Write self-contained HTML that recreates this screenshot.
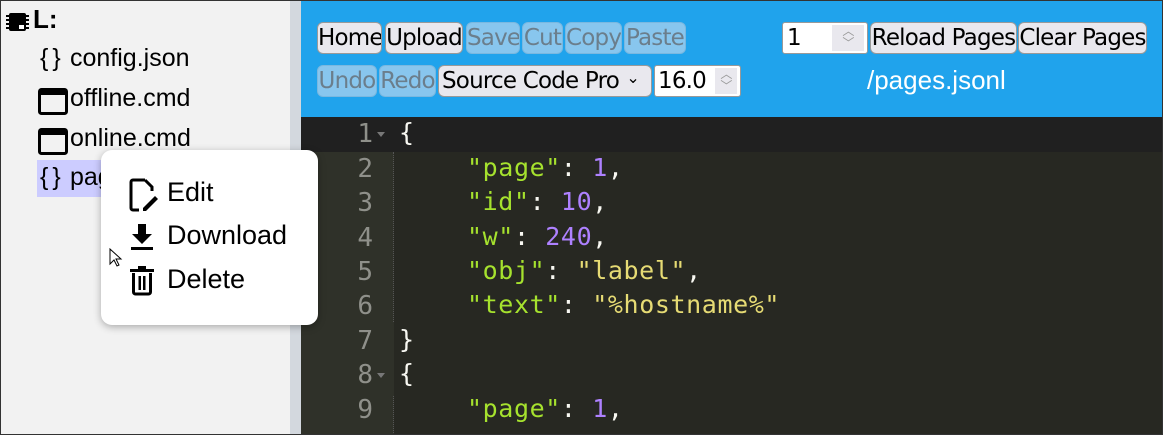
<!DOCTYPE html><html><head><style>
*{box-sizing:border-box;margin:0;padding:0}
body{width:1163px;height:435px;overflow:hidden;position:relative;background:#2f3129;font-family:"Liberation Sans",sans-serif}
.frame{position:absolute;inset:0;border:1px solid #333;z-index:50;pointer-events:none}
.side{position:absolute;left:0;top:0;width:290px;height:435px;background:#f2f2f2}
.sb{position:absolute;left:290px;top:0;width:11px;height:435px;background:#d3d8de}
.it{position:absolute;font-size:25px;color:#000;white-space:nowrap}
.hdr{position:absolute;left:301px;top:0;width:862px;height:117px;background:#20a3ec}
.b{position:absolute;height:32px;border:1px solid #999;border-radius:6px;background:#e9e8ee;font-size:23px;line-height:30px;text-align:center;color:#000;font-family:"DejaVu Sans","Liberation Sans",sans-serif;letter-spacing:-0.8px;white-space:nowrap;overflow:hidden}
.d{background:#88c6ee;border-color:#7ab8e0;color:#6b7e8c}
.ed{position:absolute;left:394px;top:117px;width:769px;height:318px;background:#272822}
.act{position:absolute;left:301px;top:117px;width:862px;height:35px;background:#202020}
.ln{position:absolute;left:301px;width:72px;text-align:right;font-family:"DejaVu Sans Mono",monospace;font-size:26px;color:#8f908a}
.code{position:absolute;font-family:"DejaVu Sans Mono",monospace;font-size:25px;color:#f8f8f2;white-space:pre;letter-spacing:0.6px}
.s{color:#a6e22e}.n{color:#ae81ff}.v{color:#e6db74}
.menu{position:absolute;left:101px;top:150px;width:217px;height:175px;background:#fff;border-radius:11px;box-shadow:0 2px 8px rgba(0,0,0,.3);z-index:10}
.mi{position:absolute;left:66px;font-size:27px;color:#000}
</style></head><body>
<div class="side">
<svg style="position:absolute;left:5px;top:12px" width="25" height="20" viewBox="0 0 25 20"><rect x="4" y="1" width="17" height="18" rx="2" fill="#000"/><g stroke="#000" stroke-width="2"><line x1="1" y1="4" x2="24" y2="4"/><line x1="1" y1="8" x2="24" y2="8"/><line x1="1" y1="12" x2="24" y2="12"/><line x1="1" y1="16" x2="24" y2="16"/></g><rect x="14" y="13" width="5" height="4" fill="#fff"/></svg>
<div class="it" style="left:33px;top:4px;font-weight:bold;font-size:26px">L:</div>
<div class="it" style="left:40px;top:44px;letter-spacing:4px">{}</div><div class="it" style="left:70px;top:44px">config.json</div>
<svg style="position:absolute;left:38px;top:88px" width="30" height="27"><rect x="1.5" y="1.5" width="27" height="24" rx="2" fill="none" stroke="#000" stroke-width="3"/><rect x="1" y="1" width="28" height="6" fill="#000"/></svg>
<div class="it" style="left:70px;top:84px">offline.cmd</div>
<svg style="position:absolute;left:38px;top:128px" width="30" height="27"><rect x="1.5" y="1.5" width="27" height="24" rx="2" fill="none" stroke="#000" stroke-width="3"/><rect x="1" y="1" width="28" height="6" fill="#000"/></svg>
<div class="it" style="left:70px;top:124px">online.cmd</div>
<div style="position:absolute;left:37px;top:160px;width:80px;height:37px;background:#ccccff"></div>
<div class="it" style="left:40px;top:163px;letter-spacing:4px">{}</div><div class="it" style="left:70px;top:163px">pages.jsonl</div>
</div>
<div class="sb"></div>
<div class="hdr">
<div class="b" style="left:16px;top:22px;width:65px">Home</div>
<div class="b" style="left:84px;top:22px;width:78px">Upload</div>
<div class="b d" style="left:165px;top:22px;width:54px">Save</div>
<div class="b d" style="left:221px;top:22px;width:41px">Cut</div>
<div class="b d" style="left:264px;top:22px;width:57px">Copy</div>
<div class="b d" style="left:323px;top:22px;width:62px">Paste</div>
<div class="b d" style="left:16px;top:65px;width:60px">Undo</div>
<div class="b d" style="left:78px;top:65px;width:57px">Redo</div>
<div class="b" style="left:137px;top:65px;width:214px;text-align:left;padding-left:3px">Source Code Pro <span style="position:absolute;right:12px;top:-3px;font-size:16px">⌄</span></div>
<div class="b" style="left:353px;top:65px;width:87px;background:#fff;text-align:left;padding-left:3px;border-radius:3px">16.0<span style="position:absolute;right:3px;top:2px;width:22px;height:26px;background:#e9e8ee;color:#999;font-size:12px;line-height:12px;text-align:center">︿<br>﹀</span></div>
<div class="b" style="left:481px;top:22px;width:86px;background:#fff;text-align:left;padding-left:4px;border-radius:3px">1<span style="position:absolute;right:3px;top:2px;width:32px;height:26px;background:#e9e8ee;color:#999;font-size:12px;line-height:12px;text-align:center">︿<br>﹀</span></div>
<div class="b" style="left:569px;top:22px;width:147px">Reload Pages</div>
<div class="b" style="left:717px;top:22px;width:129px">Clear Pages</div>
<div style="position:absolute;left:566px;top:65px;color:#fff;font-size:26px">/pages.jsonl</div>
</div>
<div class="ed"></div>
<div class="act"></div>
<div style="position:absolute;left:393px;top:152px;border-left:1px dotted #555;height:170px"></div>
<div style="position:absolute;left:393px;top:396px;border-left:1px dotted #555;height:39px"></div>
<div class="ln" style="top:119px">1</div><div class="ln" style="top:154px">2</div><div class="ln" style="top:188px">3</div><div class="ln" style="top:223px">4</div><div class="ln" style="top:257px">5</div><div class="ln" style="top:291px">6</div><div class="ln" style="top:326px">7</div><div class="ln" style="top:360px">8</div><div class="ln" style="top:395px">9</div>
<div style="position:absolute;left:377px;top:132px;border:4px solid transparent;border-top:5px solid #777"></div>
<div style="position:absolute;left:377px;top:373px;border:4px solid transparent;border-top:5px solid #777"></div>
<div class="code" style="left:399px;top:118px">{</div>
<div class="code" style="left:467px;top:153px"><span class="s">"page"</span>: <span class="n">1</span>,</div>
<div class="code" style="left:467px;top:187px"><span class="s">"id"</span>: <span class="n">10</span>,</div>
<div class="code" style="left:467px;top:222px"><span class="s">"w"</span>: <span class="n">240</span>,</div>
<div class="code" style="left:467px;top:256px"><span class="s">"obj"</span>: <span class="v">"label"</span>,</div>
<div class="code" style="left:467px;top:290px"><span class="s">"text"</span>: <span class="v">"%hostname%"</span></div>
<div class="code" style="left:399px;top:325px">}</div>
<div class="code" style="left:399px;top:359px">{</div>
<div class="code" style="left:467px;top:394px"><span class="s">"page"</span>: <span class="n">1</span>,</div>
<div class="menu">
<svg style="position:absolute;left:28px;top:28px" width="30" height="34" viewBox="0 0 30 34"><path d="M16 2H4a2 2 0 0 0-2 2v26a2 2 0 0 0 2 2h6M16 2l7 7v4" fill="none" stroke="#000" stroke-width="3"/><path d="M14 30l12-12 3 3-12 12h-3z" fill="#000"/></svg>
<div class="mi" style="top:27px">Edit</div>
<svg style="position:absolute;left:29px;top:73px" width="24" height="28"><path d="M8 1h8v10h6L12 21 2 11h6z" fill="#000"/><rect x="1" y="24" width="22" height="3" fill="#000"/></svg>
<div class="mi" style="top:70px">Download</div>
<svg style="position:absolute;left:29px;top:116px" width="24" height="30"><rect x="0" y="3" width="24" height="3" fill="#000"/><rect x="8" y="0" width="8" height="4" fill="#000"/><path d="M3.5 7v19a2 2 0 0 0 2 2h13a2 2 0 0 0 2-2V7" fill="none" stroke="#000" stroke-width="3"/><rect x="8.5" y="10" width="2.5" height="14" fill="#000"/><rect x="13" y="10" width="2.5" height="14" fill="#000"/></svg>
<div class="mi" style="top:114px">Delete</div>
</div>
<svg style="position:absolute;left:109px;top:248px;z-index:11" width="14" height="20"><path d="M1 1v15l4-4 3 6 2-1-3-6h5z" fill="#fff" stroke="#000"/></svg>
<div class="frame"></div>
</body></html>
